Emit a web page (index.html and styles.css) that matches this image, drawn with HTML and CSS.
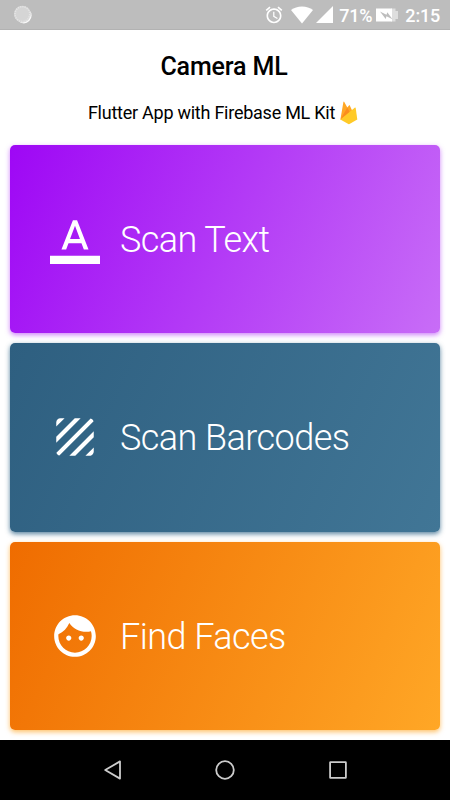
FILE: index.html
```html
<!DOCTYPE html>
<html lang="en">
<head>
    <meta charset="UTF-8">
    <meta name="viewport" content="width=device-width, initial-scale=1.0">
    <title>Camera ML</title>
    <link rel="stylesheet" href="styles.css">
</head>
<body>

<!-- Status Bar -->
<div class="status-bar">
    <svg class="status-dot" width="20" height="20" viewBox="0 0 20 20">
        <circle cx="10.8" cy="10.6" r="7.8" fill="#fafafa"/>
        <circle cx="9.4" cy="9.1" r="8.4" fill="#d5d5d5"/>
        <circle cx="9.4" cy="9.1" r="7.4" fill="none" stroke="#e4e4e4" stroke-width="1.6" stroke-dasharray="1.3 1"/>
    </svg>
    <div class="status-right">
        <svg class="alarm" width="20" height="20" viewBox="0 0 24 24">
            <path fill="#fff" d="M22 5.72l-4.6-3.86-1.29 1.53 4.6 3.86L22 5.72zM7.88 3.39L6.6 1.86 2 5.71l1.29 1.53 4.59-3.85zM12.5 8H11v6l4.75 2.85.75-1.23-4-2.37V8zM12 4c-4.97 0-9 4.03-9 9s4.02 9 9 9c4.97 0 9-4.03 9-9s-4.03-9-9-9zm0 16c-3.87 0-7-3.13-7-7s3.13-7 7-7 7 3.13 7 7-3.13 7-7 7z"/>
        </svg>
        <svg class="wifi" width="22" height="18" viewBox="0 0 22 18">
            <path fill="#fff" d="M11 17.5L0 4Q4.600 .4 11 .4T22 4z"/>
        </svg>
        <svg class="signal" width="17" height="17" viewBox="0 0 17 17">
            <path fill="#fff" d="M0 17L17 0v17z"/>
        </svg>
        <span class="percent">71%</span>
        <svg class="battery" width="23" height="14" viewBox="0 0 23 14">
            <path fill="#dedede" d="M15 .5h4.500v2.500H22v8h-2.500v2.500H15z"/>
            <path fill="#fff" d="M0 .5h16v13H0z"/>
            <path fill="#bdbdbd" d="M4 3.500l6.500 3.300.8-2.600 5.200 7-6-3-.8 2.700z"/>
        </svg>
        <span class="clock">2:15</span>
    </div>
</div>

<!-- Header -->
<div class="header">
    <h1>Camera ML</h1>
    <div class="subtitle">
        <span>Flutter App with Firebase ML Kit</span>
        <svg width="18" height="24" viewBox="0 0 18 24">
            <path fill="#ffa726" d="M.4 18.600L3.400 1q.4-.8.900 0l3 5.600L9 4.400q.4-.6.800 0L16 18z"/>
            <path fill="#fb8c1e" d="M.4 18.600L7.300 6.600l2.900 5.400z"/>
            <path fill="#ffca28" d="M.4 18.600L15 6.600q.6-.3.700.4l1.600 11.600-7.800 4.500q-.6.300-1.200 0z"/>
        </svg>
    </div>
</div>

<!-- Card List -->
<div class="card-list">
    <div class="card card-text">
        <svg class="card-icon" viewBox="0 0 24 24">
            <path d="M0 20h24v4H0z"/>
            <path d="M11 3L5.500 17h2.250l1.120-3h6.250l1.120 3h2.250L13 3h-2zm-1.380 9L12 5.670 14.380 12H9.620z"/>
        </svg>
        <span>Scan Text</span>
    </div>
    <div class="card card-barcode">
        <svg class="card-icon" viewBox="0 0 24 24">
            <path d="M19.510 3.080L3.080 19.510c.09.34.27.65.51.9.25.24.56.42.9.51L20.930 4.490c-.19-.69-.73-1.230-1.420-1.410zM11.880 3L3 11.880v2.830L14.710 3h-2.830zM5 3c-1.100 0-2 .9-2 2v2l4-4H5zm14 18c.55 0 1.050-.22 1.410-.59.37-.36.59-.86.59-1.410v-2l-4 4h2zm-9.710 0h2.830L21 12.120V9.290L9.290 21z"/>
        </svg>
        <span>Scan Barcodes</span>
    </div>
    <div class="card card-face">
        <svg class="card-icon" viewBox="0 0 24 24">
            <path d="M9 11.750c-.69 0-1.250.56-1.250 1.250s.56 1.250 1.250 1.250 1.250-.56 1.250-1.250-.56-1.250-1.250-1.250zm6 0c-.69 0-1.250.56-1.250 1.250s.56 1.250 1.250 1.250 1.250-.56 1.250-1.250-.56-1.250-1.250-1.250zM12 2C6.480 2 2 6.480 2 12s4.480 10 10 10 10-4.480 10-10S17.520 2 12 2zm0 18c-4.410 0-8-3.590-8-8 0-.29.02-.58.05-.86 2.360-1.050 4.230-2.980 5.210-5.370C11.070 8.330 14.050 10 17.420 10c.78 0 1.530-.09 2.250-.26.21.71.33 1.470.33 2.260 0 4.410-3.590 8-8 8z"/>
        </svg>
        <span>Find Faces</span>
    </div>
</div>

<!-- Navigation Bar -->
<div class="nav-bar">
    <svg width="20" height="20" viewBox="0 0 20 20"><path d="M2.200 10L17 1.400v17.200z"/></svg>
    <svg width="20" height="20" viewBox="0 0 20 20"><circle cx="10" cy="10" r="8.800"/></svg>
    <svg width="20" height="20" viewBox="0 0 20 20"><rect x="2.100" y="2.100" width="15.800" height="15.800" rx=".5"/></svg>
</div>

</body>
</html>
```

FILE: styles.css
```css
/* General Styling */
* {
    box-sizing: border-box;
}
body {
    font-family: Roboto, sans-serif;
    background-color: #ffffff;
    margin: 0;
    height: 100vh;
    display: flex;
    flex-direction: column;
    overflow: hidden;
}
svg {
    display: block;
    flex: none;
}

/* Status Bar */
.status-bar {
    height: 30px;
    flex: none;
    display: flex;
    justify-content: space-between;
    align-items: center;
    padding: 0 10px 0 13px;
    background-color: #bdbdbd;
    border-bottom: 1px solid #b2b2b2;
    color: #ffffff;
}
.status-right {
    display: flex;
    align-items: center;
    font-size: 18px;
    font-weight: 500;
    letter-spacing: -0.2px;
    line-height: 30px;
}
.wifi {
    margin-left: 7px;
}
.signal {
    margin-left: 3px;
}
.percent {
    margin: 2px 0 0 6px;
}
.battery {
    margin: 1px 0 0 4px;
}
.clock {
    margin: 2px 0 0 6px;
}

/* Header */
.header {
    height: 115px;
    flex: none;
    text-align: center;
    color: #000000;
}
.header h1 {
    margin: 0;
    padding: 22px 2px 0 0;
    font-size: 25px;
    font-weight: 500;
    letter-spacing: -0.15px;
    line-height: 30px;
}
.subtitle {
    display: flex;
    justify-content: center;
    align-items: center;
    gap: 5px;
    margin-top: 19px;
    padding-right: 4px;
    font-size: 18px;
    letter-spacing: -0.25px;
    line-height: 24px;
}

/* Cards */
.card-list {
    flex: 1;
    display: flex;
    flex-direction: column;
    gap: 10px;
    padding: 0 10px 10px;
}
.card {
    flex: 1;
    display: flex;
    align-items: center;
    gap: 20px;
    padding-left: 40px;
    border-radius: 5px;
    color: #ffffff;
    font-size: 36px;
    font-weight: 300;
    letter-spacing: -0.55px;
}
.card span {
    padding-top: 2px;
}
.card-icon {
    width: 50px;
    height: 50px;
    fill: #ffffff;
}
.card-text {
    background: linear-gradient(114deg, #9e07f5, #c86df7);
    box-shadow: 0 2px 5px rgba(158, 7, 245, 0.5);
}
.card-barcode {
    background: linear-gradient(114deg, #2e5f80, #417696);
    box-shadow: 0 2px 5px rgba(20, 80, 120, 0.7);
}
.card-face {
    background: linear-gradient(114deg, #ef6c00, #ffa726);
    box-shadow: 0 2px 5px rgba(255, 152, 0, 0.6);
}

/* Navigation Bar */
.nav-bar {
    height: 60px;
    flex: none;
    display: flex;
    justify-content: center;
    align-items: center;
    gap: 92.5px;
    background-color: #000000;
}
.nav-bar svg {
    fill: none;
    stroke: #cccccc;
    stroke-width: 1.8;
    stroke-linejoin: round;
}
```
